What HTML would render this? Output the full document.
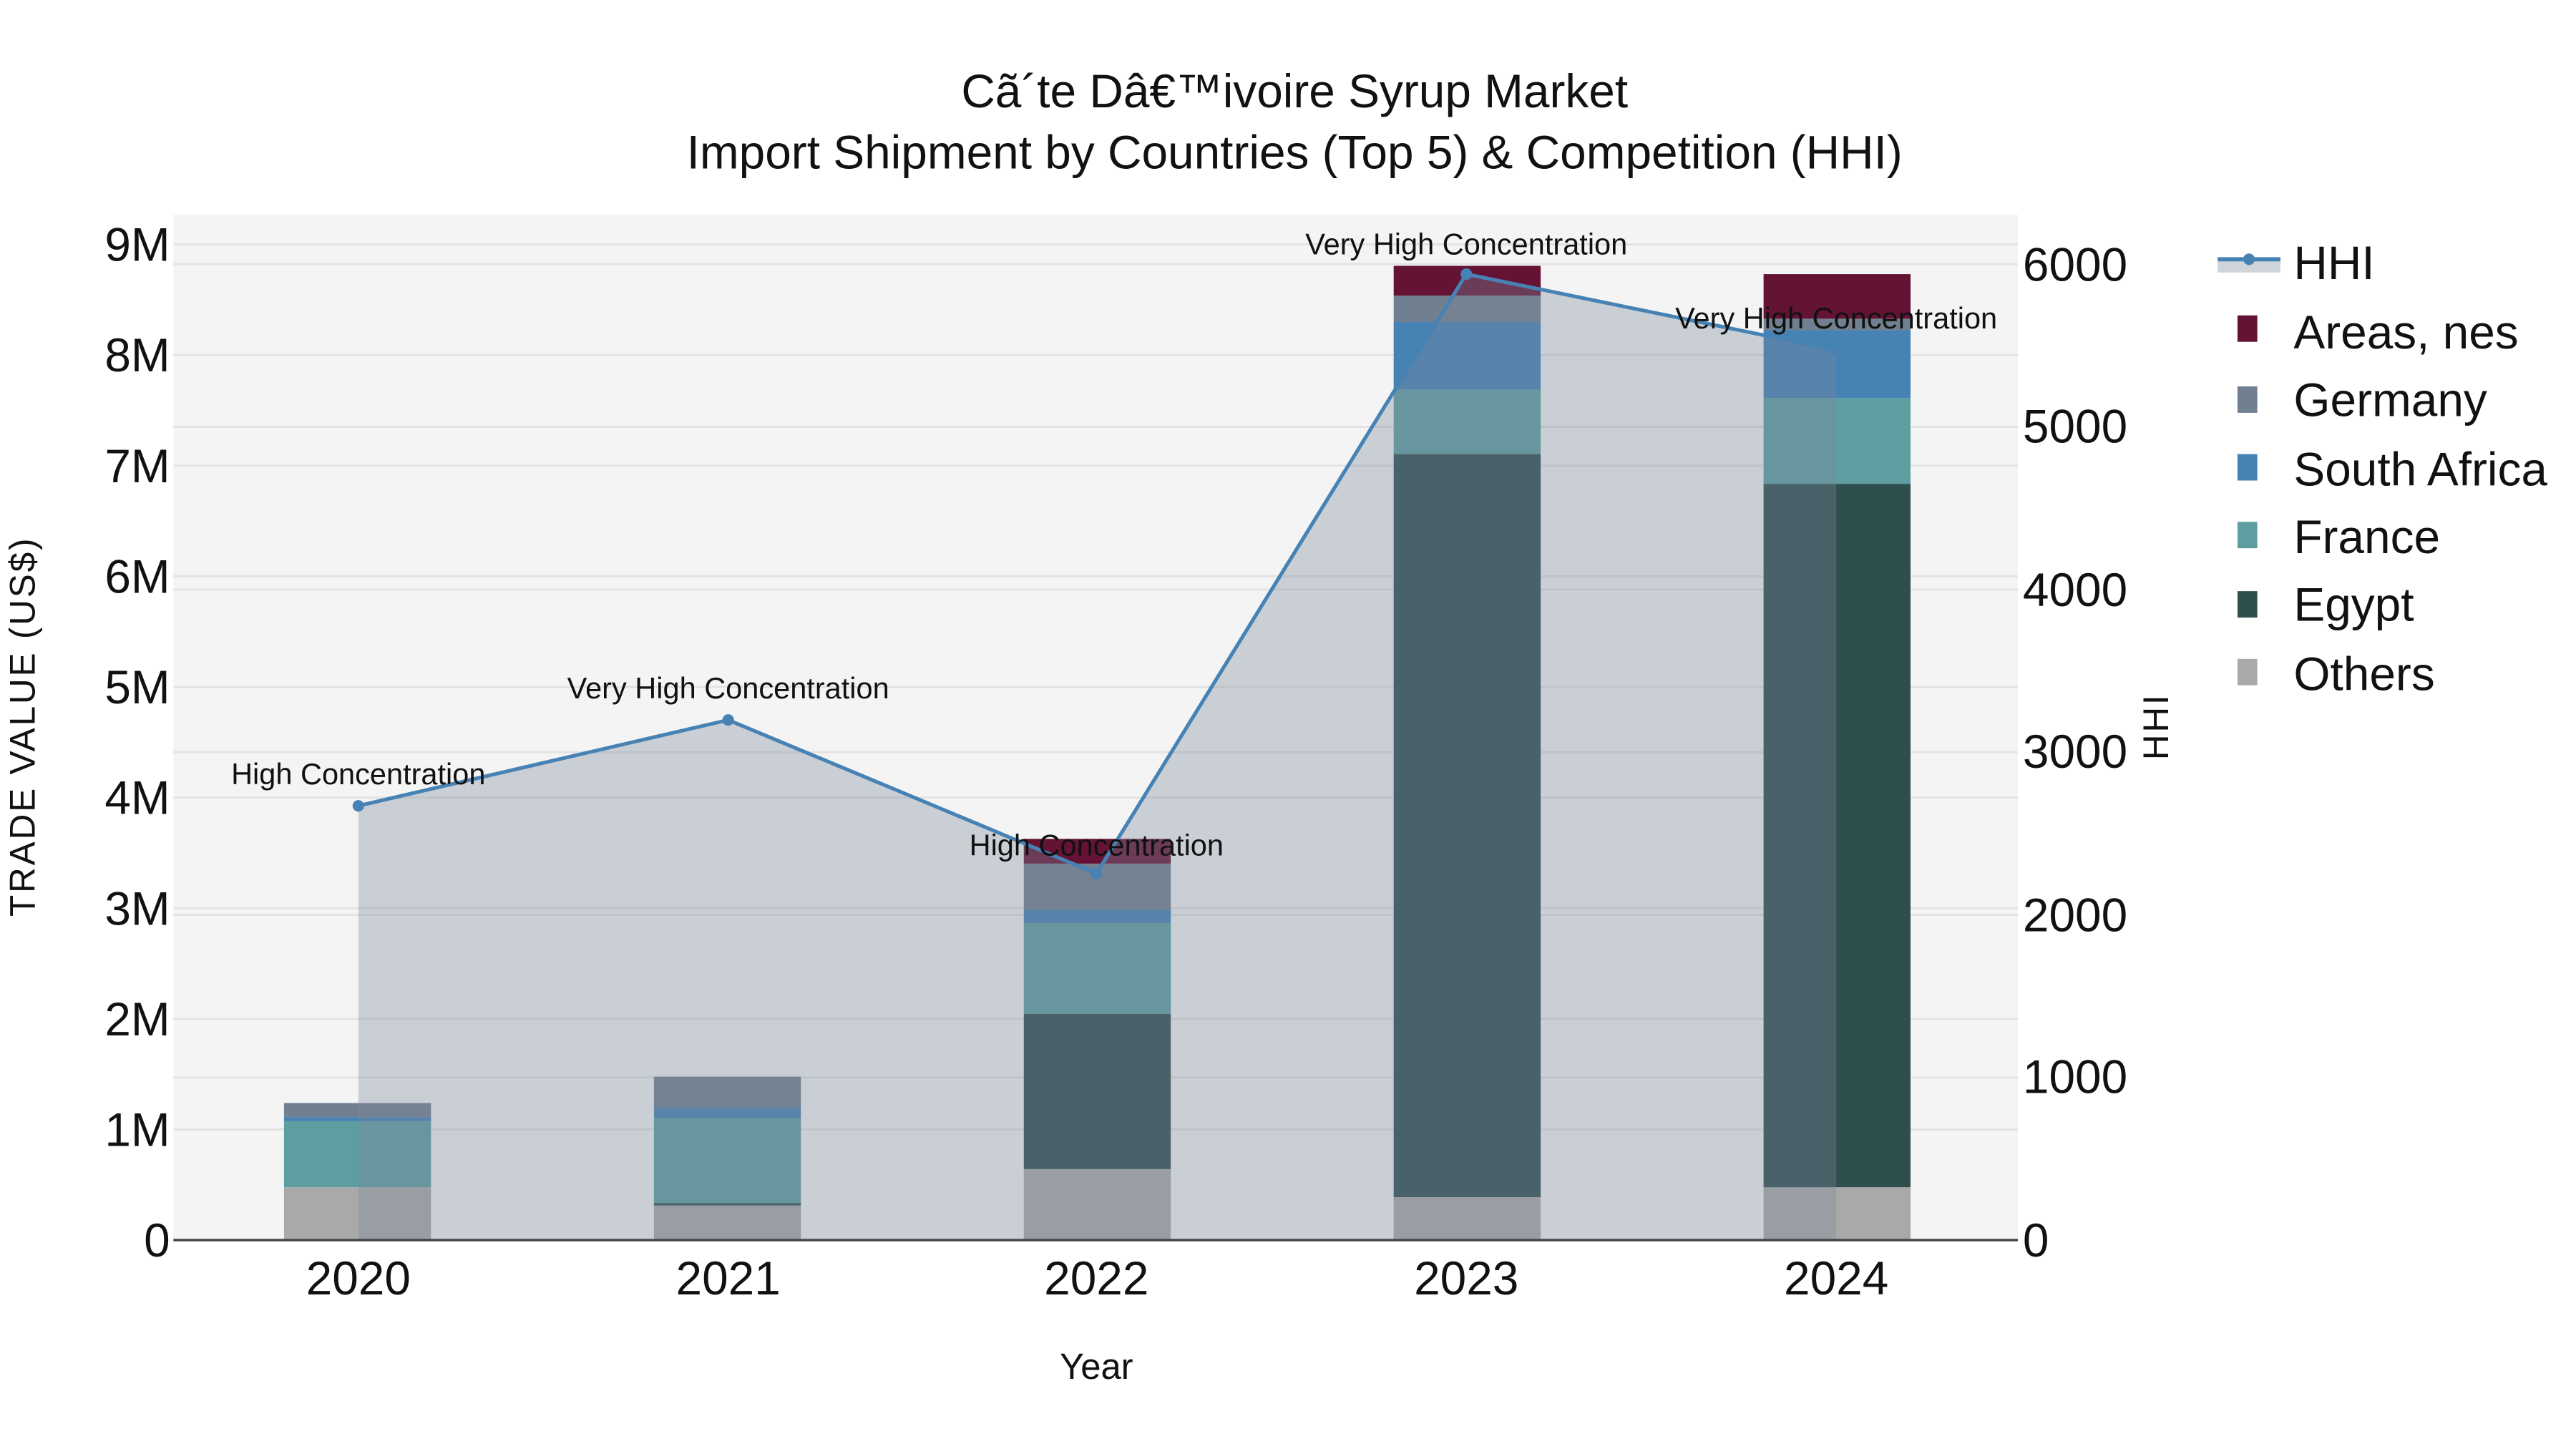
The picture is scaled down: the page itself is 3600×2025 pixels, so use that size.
<!DOCTYPE html>
<html><head><meta charset="utf-8"><style>
html,body{margin:0;padding:0;background:#fff;}
svg{display:block;}
text{font-family:"Liberation Sans",sans-serif;fill:#111;}
</style></head><body>
<svg width="3600" height="2025" viewBox="0 0 1560 877.5" xmlns="http://www.w3.org/2000/svg">
<rect x="0" y="0" width="1560" height="877.5" fill="#fff"/>
<rect x="105" y="130" width="1117" height="621" fill="#f4f4f4"/>
<g stroke="#e2e2e2" stroke-width="1.2">
<line x1="105" x2="1222" y1="684" y2="684"/><line x1="105" x2="1222" y1="617" y2="617"/>
<line x1="105" x2="1222" y1="550" y2="550"/><line x1="105" x2="1222" y1="483" y2="483"/>
<line x1="105" x2="1222" y1="416" y2="416"/><line x1="105" x2="1222" y1="349" y2="349"/>
<line x1="105" x2="1222" y1="282" y2="282"/><line x1="105" x2="1222" y1="215" y2="215"/>
<line x1="105" x2="1222" y1="148" y2="148"/>
<line x1="105" x2="1222" y1="652.5" y2="652.5"/><line x1="105" x2="1222" y1="554" y2="554"/>
<line x1="105" x2="1222" y1="455.5" y2="455.5"/><line x1="105" x2="1222" y1="357" y2="357"/>
<line x1="105" x2="1222" y1="258.5" y2="258.5"/><line x1="105" x2="1222" y1="160" y2="160"/>
</g>
<g>
<rect x="172" y="719" width="89" height="32" fill="#a9a9a9"/>
<rect x="172" y="679" width="89" height="40" fill="#5f9ea0"/>
<rect x="172" y="676.5" width="89" height="2.5" fill="#4682b4"/>
<rect x="172" y="668" width="89" height="8.5" fill="#708090"/>

<rect x="396" y="730" width="89" height="21" fill="#a9a9a9"/>
<rect x="396" y="728.5" width="89" height="1.5" fill="#2f4f4f"/>
<rect x="396" y="677" width="89" height="51.5" fill="#5f9ea0"/>
<rect x="396" y="671" width="89" height="6" fill="#4682b4"/>
<rect x="396" y="652" width="89" height="19" fill="#708090"/>

<rect x="620" y="708" width="89" height="43" fill="#a9a9a9"/>
<rect x="620" y="614" width="89" height="94" fill="#2f4f4f"/>
<rect x="620" y="559" width="89" height="55" fill="#5f9ea0"/>
<rect x="620" y="551" width="89" height="8" fill="#4682b4"/>
<rect x="620" y="523" width="89" height="28" fill="#708090"/>
<rect x="620" y="508" width="89" height="15" fill="#641335"/>

<rect x="844" y="725" width="89" height="26" fill="#a9a9a9"/>
<rect x="844" y="275" width="89" height="450" fill="#2f4f4f"/>
<rect x="844" y="236" width="89" height="39" fill="#5f9ea0"/>
<rect x="844" y="195" width="89" height="41" fill="#4682b4"/>
<rect x="844" y="179" width="89" height="16" fill="#708090"/>
<rect x="844" y="161" width="89" height="18" fill="#641335"/>

<rect x="1068" y="719" width="89" height="32" fill="#a9a9a9"/>
<rect x="1068" y="293" width="89" height="426" fill="#2f4f4f"/>
<rect x="1068" y="241" width="89" height="52" fill="#5f9ea0"/>
<rect x="1068" y="200" width="89" height="41" fill="#4682b4"/>
<rect x="1068" y="193" width="89" height="7" fill="#708090"/>
<rect x="1068" y="166" width="89" height="27" fill="#641335"/>
</g>
<path d="M217,751 L217,488 L441,436 L664,529 L888,166 L1112,212 L1112,751 Z" fill="rgb(124,135,155)" fill-opacity="0.35"/>
<polyline points="217,488 441,436 664,529 888,166 1112,212" fill="none" stroke="#4682b4" stroke-width="2.2"/>
<g fill="#4682b4"><circle cx="217" cy="488" r="3.5"/><circle cx="441" cy="436" r="3.5"/><circle cx="664" cy="529" r="3.5"/><circle cx="888" cy="166" r="3.5"/><circle cx="1112" cy="212" r="3.5"/></g>
<line x1="105" x2="1222" y1="751" y2="751" stroke="#444" stroke-width="1.5"/>
<g font-size="18" text-anchor="middle">
<text x="217" y="475">High Concentration</text>
<text x="441" y="423">Very High Concentration</text>
<text x="664" y="518">High Concentration</text>
<text x="888" y="154">Very High Concentration</text>
<text x="1112" y="199">Very High Concentration</text>
</g>
<g font-size="28.5" text-anchor="middle">
<text x="784" y="65">Cã´te Dâ€™ivoire Syrup Market</text>
<text x="784" y="102">Import Shipment by Countries (Top 5) &amp; Competition (HHI)</text>
</g>
<g font-size="28.5" text-anchor="end">
<text x="103" y="761">0</text><text x="103" y="694">1M</text><text x="103" y="627">2M</text>
<text x="103" y="560">3M</text><text x="103" y="493">4M</text><text x="103" y="426">5M</text>
<text x="103" y="359">6M</text><text x="103" y="292">7M</text><text x="103" y="225">8M</text>
<text x="103" y="158">9M</text>
</g>
<g font-size="28.5" text-anchor="start">
<text x="1225" y="761">0</text><text x="1225" y="662">1000</text><text x="1225" y="564">2000</text>
<text x="1225" y="465">3000</text><text x="1225" y="367">4000</text><text x="1225" y="268">5000</text>
<text x="1225" y="170">6000</text>
</g>
<g font-size="28.5" text-anchor="middle">
<text x="217" y="784">2020</text><text x="441" y="784">2021</text><text x="664" y="784">2022</text>
<text x="888" y="784">2023</text><text x="1112" y="784">2024</text>
</g>
<text x="664" y="835" font-size="22" text-anchor="middle">Year</text>
<text transform="translate(21,440) rotate(-90)" font-size="21.5" text-anchor="middle" letter-spacing="1.2">TRADE VALUE (US$)</text>
<text transform="translate(1313,440) rotate(-90)" font-size="21.5" text-anchor="middle" letter-spacing="1.2">HHI</text>
<rect x="1343" y="158" width="38" height="7" fill="#cfd3da"/>
<line x1="1343" x2="1381" y1="157" y2="157" stroke="#4682b4" stroke-width="2.5"/>
<circle cx="1362" cy="157" r="3.5" fill="#4682b4"/>
<rect x="1355" y="191" width="12" height="16" fill="#641335"/>
<rect x="1355" y="234" width="12" height="16" fill="#708090"/>
<rect x="1355" y="275" width="12" height="16" fill="#4682b4"/>
<rect x="1355" y="316" width="12" height="16" fill="#5f9ea0"/>
<rect x="1355" y="358" width="12" height="16" fill="#2f4f4f"/>
<rect x="1355" y="399" width="12" height="16" fill="#a9a9a9"/>
<g font-size="28.5">
<text x="1389" y="169">HHI</text>
<text x="1389" y="211">Areas, nes</text>
<text x="1389" y="252">Germany</text>
<text x="1389" y="294">South Africa</text>
<text x="1389" y="335">France</text>
<text x="1389" y="376">Egypt</text>
<text x="1389" y="418">Others</text>
</g>
</svg>
</body></html>
